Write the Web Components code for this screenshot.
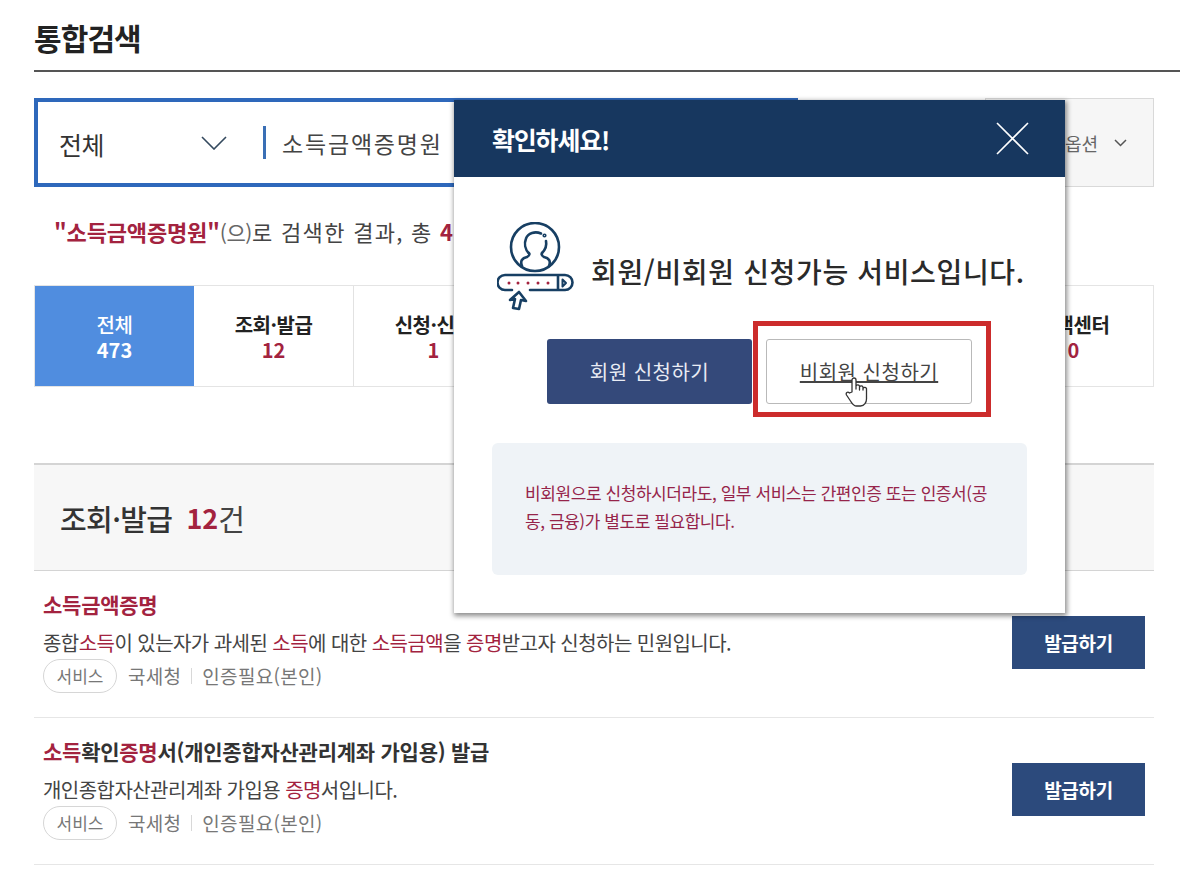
<!DOCTYPE html>
<html lang="ko"><head><meta charset="utf-8">
<style>
html,body{margin:0;padding:0;background:#fff;width:1180px;height:880px;overflow:hidden}
body{font-family:"Noto Sans CJK KR","Liberation Sans",sans-serif;color:#222;position:relative}
</style></head><body>
<search-page></search-page>
<notice-modal></notice-modal>
<script>
const K='"Noto Sans CJK KR","Liberation Sans",sans-serif';
function def(name,css,html){
  customElements.define(name,class extends HTMLElement{
    constructor(){super();const s=this.attachShadow({mode:'open'});
      s.innerHTML='<style>'+css+'</style>'+(typeof html==='function'?html(this):html);}
  });
}
def('search-bar',`
:host{display:flex;justify-content:space-between;height:89px;margin:26px 0 0 0;width:1120px;font-family:${K}}
.box{width:764px;box-sizing:border-box;border:4px solid #2e68bb;display:flex;align-items:center;padding-left:21px}
.sel{width:142px;font-size:25px;color:#333;letter-spacing:-.5px;padding-top:2px}
svg{display:block}
.bar{width:3px;height:33px;background:#3a6fb5;margin:0 16px 0 36px}
.q{font-size:23px;color:#444;letter-spacing:1.8px}
.opt{width:169px;box-sizing:border-box;border:1px solid #d9d9d9;background:#f6f6f6;display:flex;align-items:center;justify-content:flex-end;padding-right:26px;gap:16px;font-size:18px;color:#666}
`,`<div class="box"><span class="sel">전체</span>
<svg width="26" height="14" viewBox="0 0 26 14" fill="none" stroke="#34495e" stroke-width="1.6"><path d="M1 1l12 12L25 1"/></svg>
<span class="bar"></span><span class="q">소득금액증명원</span></div>
<div class="opt"><span>옵션</span><svg width="13" height="8" viewBox="0 0 13 8" fill="none" stroke="#555" stroke-width="1.5"><path d="M1 1l5.500 5.500L12 1"/></svg></div>`);

def('result-summary',`
:host{display:block;margin:27px 0 0 20px;height:34px;line-height:34px;font-size:22px;color:#444;font-family:${K};white-space:nowrap;letter-spacing:1.3px}
b{color:#a3233f;font-weight:700;letter-spacing:-.15px}
.p{font-size:21px;color:#666;letter-spacing:-.4px}
.n{color:#a3233f;font-weight:700;letter-spacing:.5px}
`,`<b>"소득금액증명원"</b><span class="p">(으)</span>로 검색한 결과, 총 <span class="n">473</span>건`);

def('tab-cell',`
:host{display:flex;flex-direction:column;align-items:center;justify-content:center;flex:1;box-sizing:border-box;padding-top:2px;border-right:1px solid #e2e2e2;font-family:${K};font-size:20px;line-height:25px;font-weight:700;color:#222;letter-spacing:-.5px}
:host(:last-child){border-right:0}
:host([on]){background:#508ddf;color:#fff;border-right:0;font-weight:500;flex:none;width:159px}
.n{color:#a3233f;letter-spacing:0;font-size:20px;font-weight:700}
:host([on]) .n{color:#fff}
`,t=>`<span><slot></slot></span><span class="n">${t.getAttribute('n')}</span>`);

def('tab-row',`
:host{display:flex;height:102px;box-sizing:border-box;margin-top:37px;width:1120px;border:1px solid #e4e4e4}
`,`<slot></slot>`);

def('section-head',`
:host{display:flex;align-items:center;height:108px;box-sizing:border-box;margin-top:76px;width:1120px;padding:0 0 0 26px;background:#f7f7f7;border-top:2px solid #d4d4d4;border-bottom:1px solid #d4d4d4;font-family:${K};font-size:29px;color:#333;letter-spacing:-.6px}
b{color:#a3233f;margin-left:14px;font-weight:700;letter-spacing:0;font-size:27px}
.a{font-weight:500}
.c{font-weight:400;color:#444}
`,`<span class="a">조회·발급</span><b>12</b><span class="c">건</span>`);

def('result-item',`
:host{display:flex;justify-content:space-between;align-items:center;height:147px;box-sizing:border-box;width:1120px;border-bottom:1px solid #e6e6e6;padding:0 9px;font-family:${K}}
.c{padding-bottom:5px}
.t{font-size:21px;font-weight:700;color:#333;line-height:26px;letter-spacing:-.25px;white-space:nowrap}
.d{font-size:20px;color:#444;line-height:26px;margin-top:13px;letter-spacing:-.55px;white-space:nowrap}
.m{display:flex;align-items:center;margin-top:3px;height:34px;font-size:19px;color:#777;letter-spacing:.3px}
.tag{width:74px;height:34px;box-sizing:border-box;border:1px solid #d6d6d6;border-radius:17px;display:flex;align-items:center;justify-content:center;font-size:17px;color:#777;margin-right:11px;letter-spacing:0}
.sep{width:1px;height:16px;background:#d8d8d8;margin:0 10px}
.btn{width:133px;height:53px;margin-bottom:3px;background:#2c4a7c;color:#fff;font-size:19px;font-weight:700;display:flex;align-items:center;justify-content:center;letter-spacing:-.3px}
`,`<div class="c"><div class="t"><slot name="t"></slot></div><div class="d"><slot name="d"></slot></div>
<div class="m"><span class="tag">서비스</span><span>국세청</span><span class="sep"></span><span>인증필요(본인)</span></div></div>
<div class="btn">발급하기</div>`);

def('hl-text',`:host{color:#a3233f}`,`<slot></slot>`);

def('search-page',`
:host{display:block;padding:0 0 0 34px;font-family:${K}}
h1{margin:0;font-size:30px;line-height:38px;padding-top:18px;padding-bottom:14px;font-weight:700;color:#222;letter-spacing:-.9px;border-bottom:2px solid #555}
`,`<h1>통합검색</h1>
<search-bar></search-bar>
<result-summary></result-summary>
<tab-row>
<tab-cell on n="473">전체</tab-cell><tab-cell n="12">조회·발급</tab-cell><tab-cell n="1">신청·신고</tab-cell><tab-cell n="0">기관</tab-cell><tab-cell n="0">정보</tab-cell><tab-cell n="0">게시판</tab-cell><tab-cell n="0">고객센터</tab-cell>
</tab-row>
<section-head></section-head>
<result-item><span slot="t" style="color:#a3233f">소득금액증명</span>
<span slot="d">종합<hl-text>소득</hl-text>이 있는자가 과세된 <hl-text>소득</hl-text>에 대한 <hl-text>소득금액</hl-text>을 <hl-text>증명</hl-text>받고자 신청하는 민원입니다.</span></result-item>
<result-item><span slot="t"><hl-text>소득</hl-text>확인<hl-text>증명</hl-text>서(개인종합자산관리계좌 가입용) 발급</span>
<span slot="d">개인종합자산관리계좌 가입용 <hl-text>증명</hl-text>서입니다.</span></result-item>`);

def('notice-modal',`
:host{position:absolute;left:454px;top:100px;width:611px;height:513px;background:#fff;box-shadow:1px 2px 5px 1px rgba(0,0,0,.45);font-family:${K};display:flex;flex-direction:column;z-index:5}
.h{height:77px;background:#17375f;color:#fff;display:flex;align-items:center;justify-content:space-between;padding:0 36px 0 38px;font-size:25px;font-weight:700;letter-spacing:-1.2px;flex:none}
.h svg{display:block}
.main{display:flex;align-items:flex-end;padding:45px 0 0 43px;gap:14px;height:92px}
.title{font-size:28px;font-weight:500;color:#2a2a2a;letter-spacing:.65px;line-height:36px;margin-bottom:25px;white-space:nowrap}
.b{height:65px;box-sizing:border-box;display:flex;align-items:center;justify-content:center;font-size:20px;letter-spacing:.5px;border-radius:3px}
.m{width:205px;background:#34497a;color:#e9ecf4;margin-left:93px}
.g{width:206px;border:1px solid #b9b9b9;color:#444;text-decoration:underline;margin-left:14px}
.wrap{position:relative;display:flex;width:100%;margin-top:25px}
.red{position:absolute;left:299px;top:-18px;width:238px;height:96px;box-sizing:border-box;border:5px solid #cc2c2c;pointer-events:none}
.cur{position:absolute;left:391px;top:38px}
.info{margin:39px 38px 0 38px;height:132px;box-sizing:border-box;background:#eff3f7;border-radius:6px;padding:36px 20px 0 33px;font-size:17px;line-height:28px;color:#96244a;letter-spacing:-.42px;white-space:nowrap}
`,`<div class="h"><span>확인하세요!</span>
<svg width="33" height="33" viewBox="0 0 33 33" fill="none" stroke="#fff" stroke-width="1.6"><path d="M1 1l31 31M32 1L1 32"/></svg></div>
<div class="main">
<svg width="80" height="92" viewBox="0 0 80 92" fill="none" stroke="#173f63" stroke-width="2.600" stroke-linecap="round" stroke-linejoin="round" style="flex:none">
<circle cx="38" cy="25" r="24"/>
<path d="M44 11.500c-6-2.500-13-.5-15 5-2 5-1 11 3 15"/>
<path d="M49 19c1 5-1 9-4 12"/>
<circle cx="47.500" cy="13.500" r=".8"/>
<path d="M32 31c1 2 0 3-2 4-5 1-7 4-5 9M45 31c-1 2 0 3 2 4 5 1 7 4 5 9"/>
<path d="M8 54H68a7.500 7.500 0 0 1 0 15H33M15 69H8a7.500 7.500 0 0 1 0-15M61 54v15" transform="translate(0 -1)"/>
<path d="M65.500 57.500l3.500 3.500-3.500 3.500z" stroke-width="2"/>
<path d="M22 70l7 9-5-1-2 9-6-1 2-9-5 1z"/>
<g fill="#a3233f" stroke="none"><circle cx="12" cy="61" r="1.500"/><circle cx="21" cy="61" r="1.500"/><circle cx="31" cy="61" r="1.500"/><circle cx="41" cy="61" r="1.500"/><circle cx="51" cy="61" r="1.500"/></g>
</svg>
<div class="title">회원/비회원 신청가능 서비스입니다.</div></div>
<div class="wrap">
<div class="b m">회원 신청하기</div><div class="b g">비회원 신청하기</div>
<div class="red"></div>
<svg class="cur" width="24" height="32" viewBox="0 0 24 32" fill="#fff" stroke="#333" stroke-width="1.300" stroke-linejoin="round"><path d="M7 15V3a2 2 0 0 1 4 0v9V9a2 2 0 0 1 3.500 0v4-3a2 2 0 0 1 3.500 0v3-1.500a2 2 0 0 1 3.500 0V22c0 3-2 7-6 7h-4c-3 0-4-2-6-5l-4-6c-1-2 1-4 3-2z"/></svg>
</div>
<div class="info">비회원으로 신청하시더라도, 일부 서비스는 간편인증 또는 인증서(공<br>동, 금융)가 별도로 필요합니다.</div>`);
</script>
</body></html>
